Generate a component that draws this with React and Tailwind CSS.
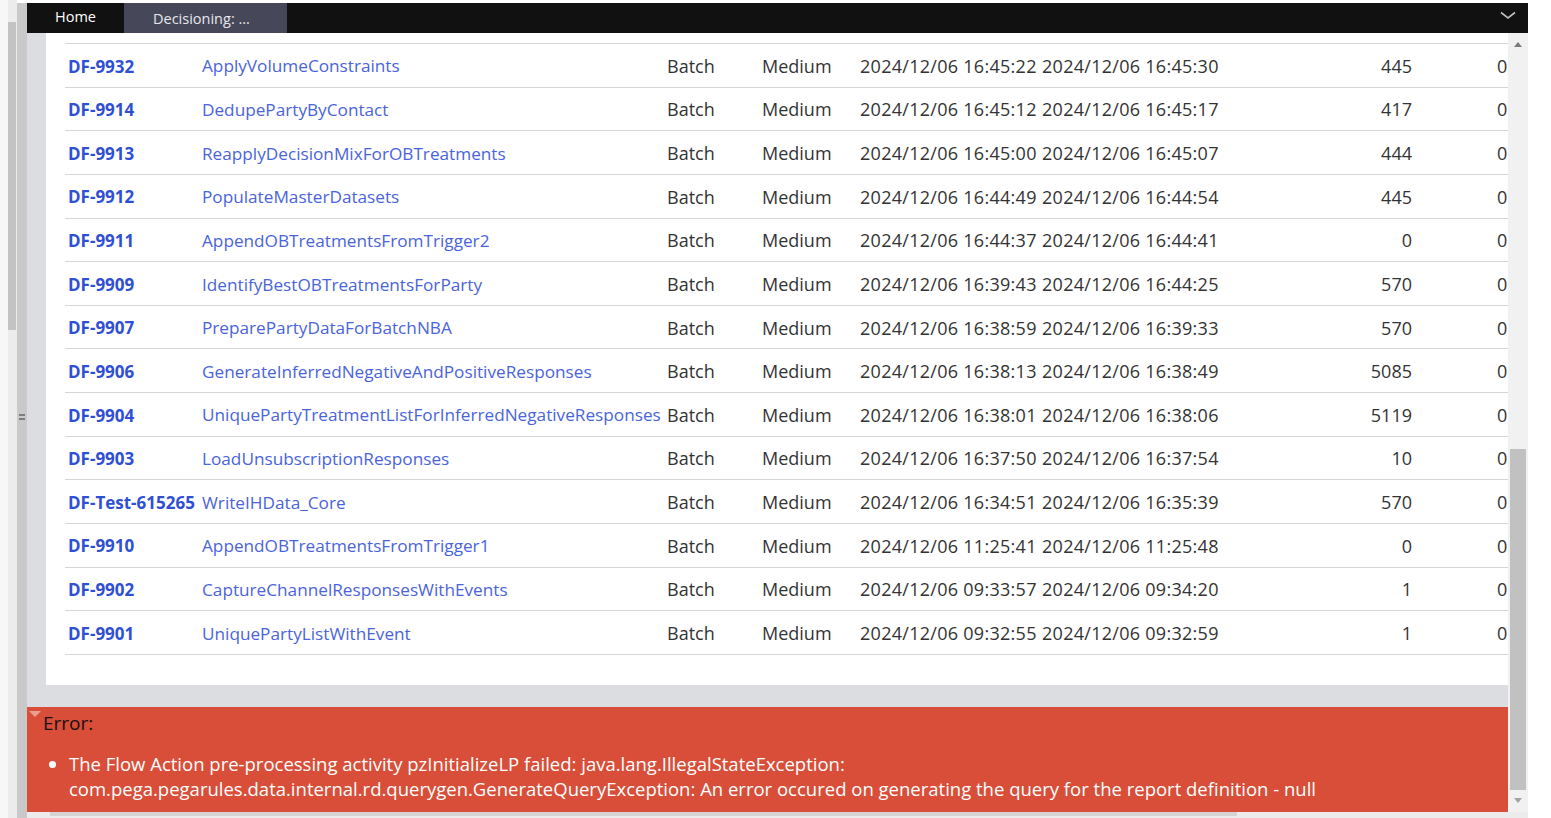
import React from 'react';

const rows = [
  ['DF-9932', 'ApplyVolumeConstraints', '2024/12/06 16:45:22', '2024/12/06 16:45:30', '445'],
  ['DF-9914', 'DedupePartyByContact', '2024/12/06 16:45:12', '2024/12/06 16:45:17', '417'],
  ['DF-9913', 'ReapplyDecisionMixForOBTreatments', '2024/12/06 16:45:00', '2024/12/06 16:45:07', '444'],
  ['DF-9912', 'PopulateMasterDatasets', '2024/12/06 16:44:49', '2024/12/06 16:44:54', '445'],
  ['DF-9911', 'AppendOBTreatmentsFromTrigger2', '2024/12/06 16:44:37', '2024/12/06 16:44:41', '0'],
  ['DF-9909', 'IdentifyBestOBTreatmentsForParty', '2024/12/06 16:39:43', '2024/12/06 16:44:25', '570'],
  ['DF-9907', 'PreparePartyDataForBatchNBA', '2024/12/06 16:38:59', '2024/12/06 16:39:33', '570'],
  ['DF-9906', 'GenerateInferredNegativeAndPositiveResponses', '2024/12/06 16:38:13', '2024/12/06 16:38:49', '5085'],
  ['DF-9904', 'UniquePartyTreatmentListForInferredNegativeResponses', '2024/12/06 16:38:01', '2024/12/06 16:38:06', '5119'],
  ['DF-9903', 'LoadUnsubscriptionResponses', '2024/12/06 16:37:50', '2024/12/06 16:37:54', '10'],
  ['DF-Test-615265', 'WriteIHData_Core', '2024/12/06 16:34:51', '2024/12/06 16:35:39', '570'],
  ['DF-9910', 'AppendOBTreatmentsFromTrigger1', '2024/12/06 11:25:41', '2024/12/06 11:25:48', '0'],
  ['DF-9902', 'CaptureChannelResponsesWithEvents', '2024/12/06 09:33:57', '2024/12/06 09:34:20', '1'],
  ['DF-9901', 'UniquePartyListWithEvent', '2024/12/06 09:32:55', '2024/12/06 09:32:59', '1'],
];

function Row({ r }) {
  return (
    <div className="flex items-center h-[43.64px] border-b border-[#d6d6d6] w-[1600px] text-[17px] whitespace-nowrap pt-[2px]">
      <div className="w-[134px] pl-[3px] font-bold text-[#2f4fd4]">{r[0]}</div>
      <div className="w-[465px] pl-[3px] text-[#4a64db] text-[17.2px]">{r[1]}</div>
      <div className="w-[95px] pl-[3px] text-[#333] text-[18px]">Batch</div>
      <div className="w-[98px] pl-[3px] text-[#333] text-[18px]">Medium</div>
      <div className="w-[185px] pl-[3px] text-[#333] text-[18px] tracking-[0.28px]">{r[2]}</div>
      <div className="w-[200px] text-[#333] text-[18px] tracking-[0.28px]">{r[3]}</div>
      <div className="w-[170px] text-right text-[#333] text-[18px]">{r[4]}</div>
      <div className="pl-[85px] text-[#333] text-[18px]">0</div>
    </div>
  );
}

export default function App() {
  return (
    <div className="w-[1551px] h-[818px] overflow-hidden bg-white flex" style={{ fontFamily: '"Open Sans", "Noto Sans", sans-serif' }}>
      {/* left gutter + outer scrollbar */}
      <div className="w-[8px] bg-[#f7f7f7]" />
      <div className="w-[9px] bg-[#ececec] pt-[22px]">
        <div className="h-[308px] w-[8px] bg-[#c3c3c3]" />
      </div>
      {/* splitter */}
      <div className="w-[10px] mt-[3px] bg-[#c9c9c9] flex flex-col items-center justify-center gap-[2px]">
        <div className="w-[6px] h-[2px] bg-[#7d7d7d] mt-[12px]" />
        <div className="w-[6px] h-[2px] bg-[#7d7d7d]" />
      </div>

      <div className="w-[1501px] flex flex-col pt-[3px]">
        {/* tab bar */}
        <div className="h-[30px] bg-[#111] flex items-stretch shrink-0 leading-[20px]">
          <div className="w-[97px] pl-[28px] pt-[4px] text-white text-[14.5px]">Home</div>
          <div className="w-[163px] bg-[#47475a] pl-[29px] pt-[6px] text-[#e6e6ea] text-[14.5px]">Decisioning: ...</div>
          <div className="flex-1" />
          <div className="w-[40px] flex items-start justify-center pt-[8px]">
            <svg width="16" height="9" viewBox="0 0 16 9" fill="none">
              <path d="M1 1.5 L8 7 L15 1.5" stroke="#bdbdbd" strokeWidth="1.6" />
            </svg>
          </div>
        </div>

        <div className="flex h-[779px] shrink-0">
          <div className="w-[1481px] flex flex-col overflow-hidden">
            <div className="bg-[#dcdde1] pl-[19px] h-[674px] shrink-0">
              <div className="bg-white h-[652px] overflow-hidden pl-[19px]">
                <div className="h-[11px] border-b border-[#d6d6d6] w-[1600px]" />
                {rows.map((r) => (
                  <Row key={r[0]} r={r} />
                ))}
              </div>
            </div>
            <div className="relative bg-[#d84e38] h-[105px] shrink-0 pl-[16px] pt-[3px]">
              <div className="absolute left-[2px] top-[4px] w-0 h-0 border-l-[6px] border-r-[6px] border-t-[6px] border-l-transparent border-r-transparent border-t-[#eaa08f]" />
              <div className="text-[19px] text-[#1a1010] leading-[26px]">Error:</div>
              <ul className="mt-[15px] pl-[26px] list-disc text-white text-[18.5px] leading-[25px] marker:text-white">
                <li>
                  The Flow Action pre-processing activity pzInitializeLP failed: java.lang.IllegalStateException:
                  <br />
                  com.pega.pegarules.data.internal.rd.querygen.GenerateQueryException: An error occured on generating the query for the report definition - null
                </li>
              </ul>
            </div>
          </div>
          {/* inner scrollbar */}
          <div className="w-[20px] bg-[#f1f1f1] flex flex-col items-center">
            <div className="mt-[9px] w-0 h-0 border-l-[4px] border-r-[4px] border-b-[5px] border-l-transparent border-r-transparent border-b-[#7a7a7a]" />
            <div className="mt-[402px] w-[16px] h-[341px] bg-[#c1c1c1]" />
            <div className="mt-[8px] w-0 h-0 border-l-[4px] border-r-[4px] border-t-[5px] border-l-transparent border-r-transparent border-t-[#a3a3a3]" />
          </div>
        </div>
        <div className="h-[6px] bg-[#ececec] pl-[23px]">
          <div className="w-[1187px] h-[4px] bg-[#d4d4d4]" />
        </div>
      </div>
      <div className="flex-1 bg-white" />
    </div>
  );
}
